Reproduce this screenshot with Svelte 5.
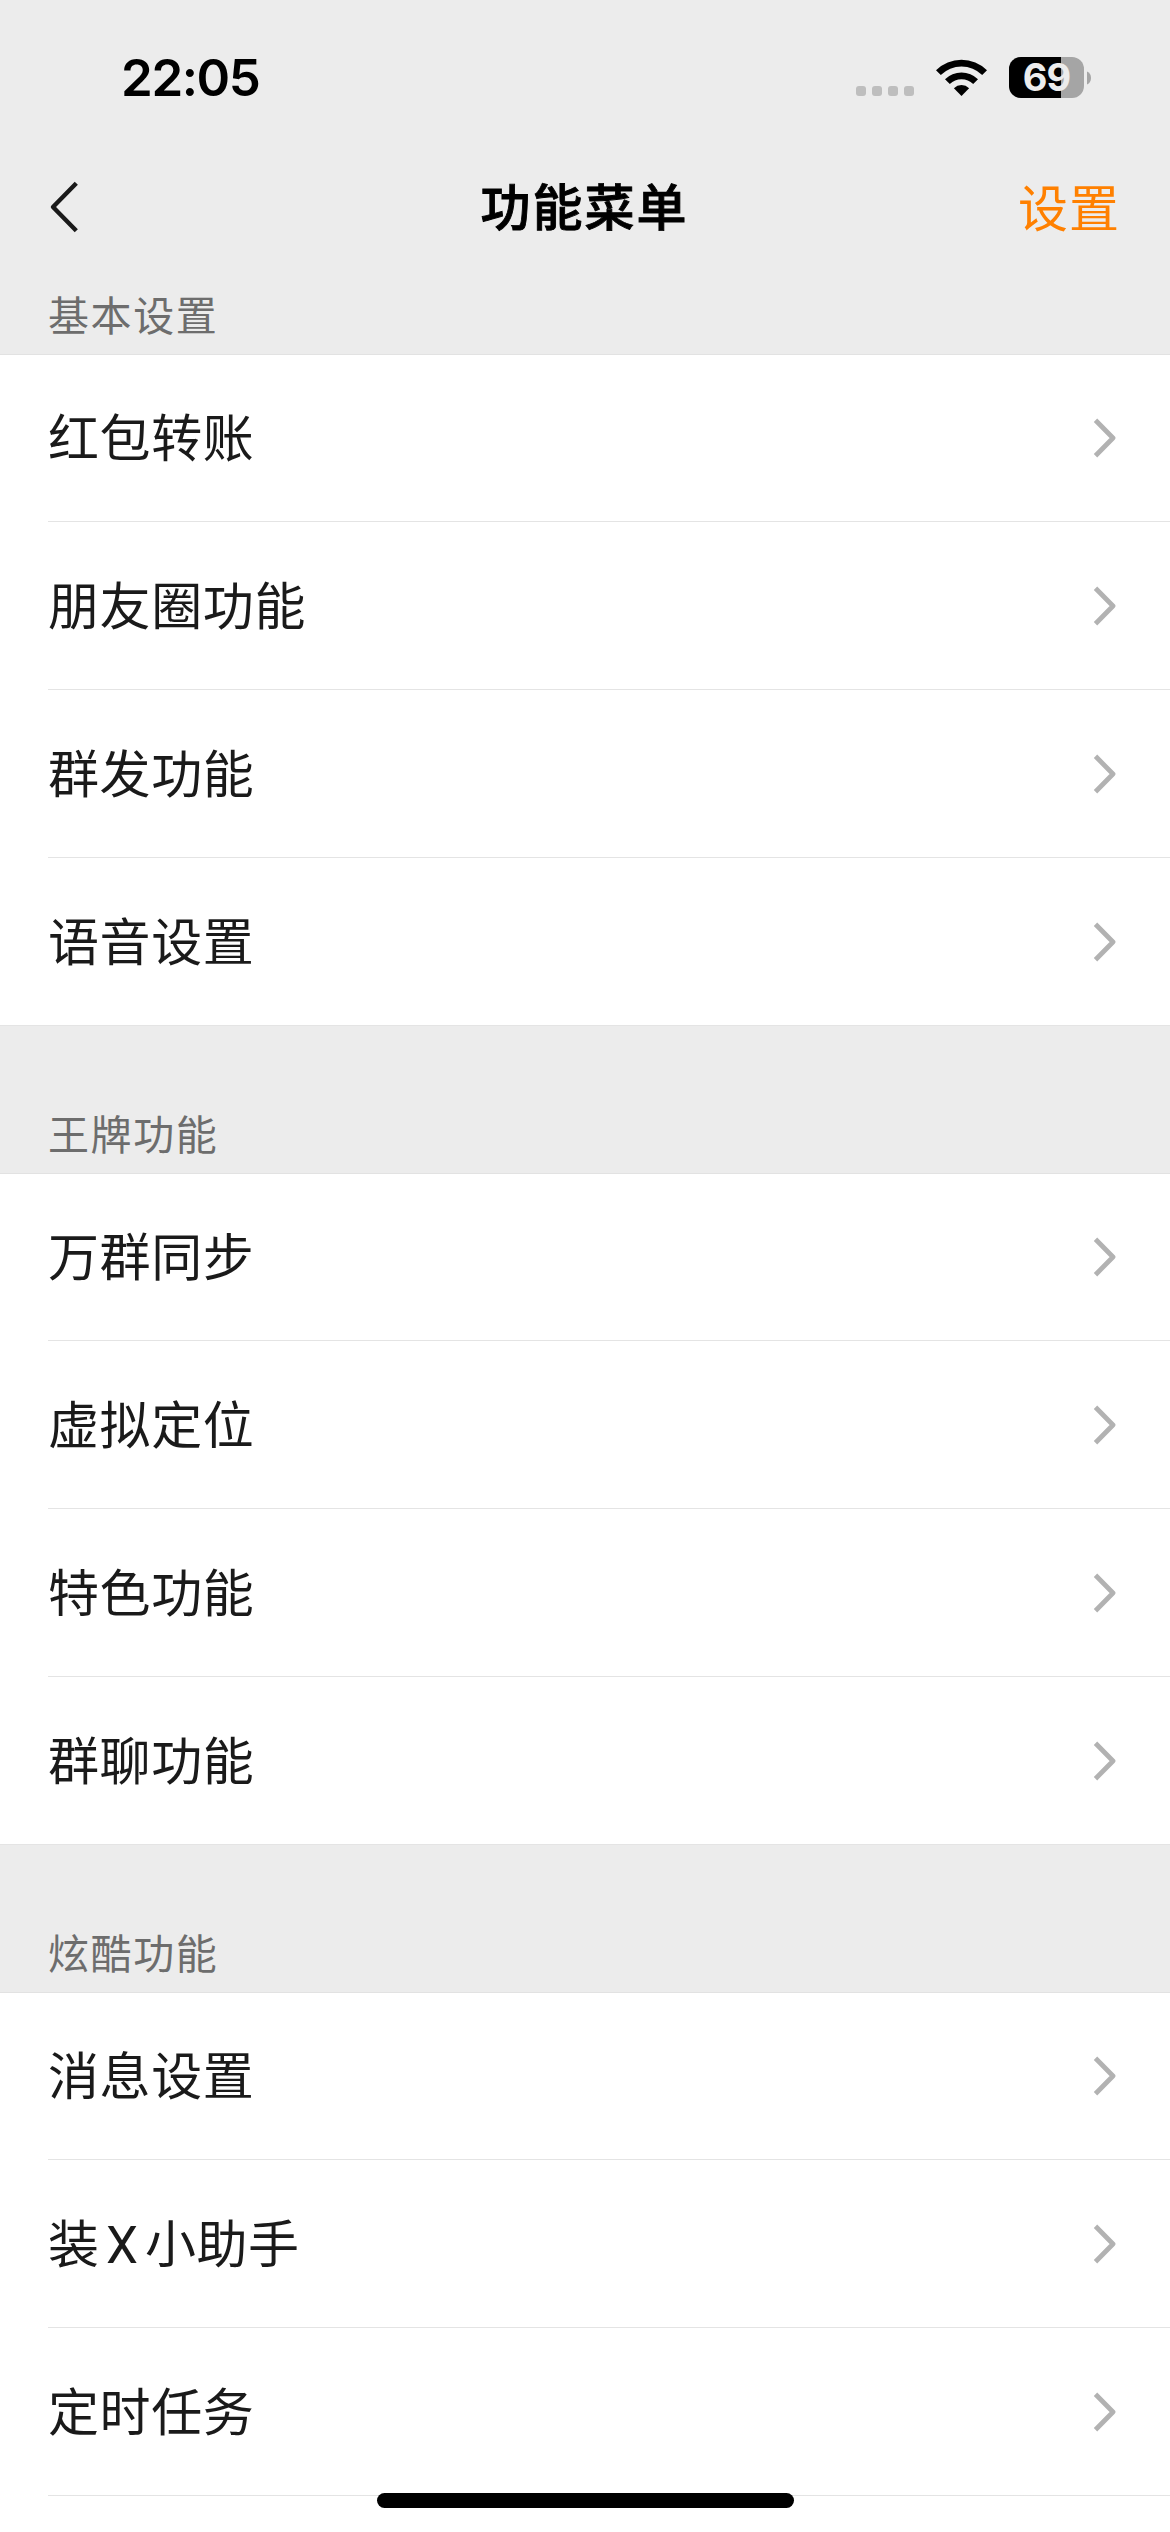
<script>
	const time = '22:05';
	const battery = 69;

	const sections = [
		{
			title: '基本设置',
			items: ['红包转账', '朋友圈功能', '群发功能', '语音设置']
		},
		{
			title: '王牌功能',
			items: ['万群同步', '虚拟定位', '特色功能', '群聊功能']
		},
		{
			title: '炫酷功能',
			items: ['消息设置', '装X小助手', '定时任务']
		}
	];
</script>

<div class="screen">
	<div class="status">
		<span class="time">{time}</span>
		<div class="indicators">
			<div class="signal">
				{#each Array(4) as _}
					<i></i>
				{/each}
			</div>
			<svg class="wifi" width="51" height="38" viewBox="0 0 51 38">
				<path d="M0 11.2A36.4 36.4 0 0 1 51 11.2L46.2 16A29.6 29.6 0 0 0 4.8 16Z" />
				<path d="M9 20.2A23.6 23.6 0 0 1 42 20.2L37.2 25A16.8 16.8 0 0 0 13.8 25Z" />
				<path d="M17.9 29.2A10.9 10.9 0 0 1 33.1 29.2L25.5 37Z" />
			</svg>
			<div class="battery">
				<div class="cell">
					<div class="level" style="width: {battery}%"></div>
					<span>{battery}</span>
				</div>
				<svg width="4" height="14" viewBox="0 0 4 14">
					<path d="M0 0.5C2.6 1.6 4 4 4 7S2.6 12.4 0 13.5Z" />
				</svg>
			</div>
		</div>
	</div>

	<nav>
		<button class="back" aria-label="返回">
			<svg width="30" height="54" viewBox="0 0 30 54">
				<path d="M27.3 3.2L4 27L27.3 50.8" />
			</svg>
		</button>
		<h1>功能菜单</h1>
		<button class="settings">设置</button>
	</nav>

	{#each sections as section}
		<section>
			<h2>{section.title}</h2>
			<ul>
				{#each section.items as item}
					<li>
						<span>{item}</span>
						<svg width="24" height="42" viewBox="0 0 24 42">
							<path d="M3.5 3.3L21 21L3.5 38.7" />
						</svg>
					</li>
				{/each}
			</ul>
		</section>
	{/each}

	<div class="home"></div>
</div>

<style>
	:global(body) {
		margin: 0;
		background: #ececec;
	}

	.screen {
		position: relative;
		display: flex;
		flex-direction: column;
		width: 1170px;
		height: 2532px;
		overflow: hidden;
		background: #ececec;
		color: #1a1a1a;
		font-family: 'Noto Sans CJK SC', sans-serif;
		text-autospace: normal;
	}

	.status {
		display: flex;
		justify-content: space-between;
		height: 141px;
		padding: 0 79px 0 121px;
		box-sizing: border-box;
		flex: none;
		color: #000;
		font-family: Inter, sans-serif;
	}

	.time {
		padding-top: 48px;
		font-size: 51px;
		font-weight: 600;
		line-height: 60px;
		letter-spacing: -1.4px;
	}

	.indicators {
		display: flex;
		align-items: flex-start;
		padding-top: 57px;
	}

	.signal {
		display: flex;
		gap: 6px;
		margin: 29px 22px 0 0;
	}

	.signal i {
		width: 10px;
		height: 10px;
		border-radius: 3px;
		background: #bebebe;
	}

	.wifi {
		margin: 2px 22px 0 0;
	}

	.battery {
		display: flex;
		align-items: center;
		gap: 3px;
	}

	.battery svg {
		fill: #a5a5a5;
	}

	.cell {
		display: grid;
		align-items: center;
		width: 75px;
		height: 41px;
		border-radius: 12px;
		background: #a5a5a5;
	}

	.level,
	.cell span {
		grid-area: 1 / 1;
	}

	.level {
		height: 41px;
		border-radius: 12px 0 0 12px;
		background: #000;
	}

	.cell span {
		color: #ececec;
		font-size: 38px;
		font-weight: 700;
		line-height: 41px;
		letter-spacing: -1px;
		text-align: center;
	}

	nav {
		display: grid;
		grid-template-columns: 1fr auto 1fr;
		align-items: center;
		flex: none;
		height: 132px;
		padding: 0 50px 0 49px;
		box-sizing: border-box;
	}

	button {
		padding: 0;
		border: none;
		background: none;
		font-family: inherit;
	}

	.back {
		justify-self: start;
		display: flex;
	}

	.back path,
	li path {
		fill: none;
		stroke: #1a1a1a;
		stroke-width: 4.4;
		stroke-linejoin: round;
	}

	h1 {
		margin: 0 0 6px;
		color: #000;
		font-size: 50px;
		font-weight: 500;
		line-height: 60px;
		letter-spacing: 2px;
		-webkit-text-stroke: 0.9px #000;
	}

	.settings {
		justify-self: end;
		margin-bottom: 5px;
		color: #ff8000;
		font-size: 50px;
		line-height: 60px;
		letter-spacing: 1px;
	}

	section {
		flex: none;
	}

	section:last-of-type {
		flex: 1;
		display: flex;
		flex-direction: column;
	}

	h2 {
		display: flex;
		align-items: flex-end;
		height: 147px;
		margin: 0;
		padding: 0 48px 11px;
		box-sizing: border-box;
		flex: none;
		color: #6d6d6d;
		font-size: 41px;
		font-weight: 400;
		line-height: 60px;
		letter-spacing: 1.6px;
	}

	section:first-of-type h2 {
		height: 81px;
	}

	ul {
		margin: 0;
		padding: 0;
		border-top: 1px solid #e2e2e2;
		border-bottom: 1px solid #e4e4e4;
		background: #fff;
		list-style: none;
	}

	section:last-of-type ul {
		flex: 1;
		border-bottom: none;
	}

	li {
		display: flex;
		align-items: center;
		justify-content: space-between;
		height: 168px;
		margin-left: 48px;
		padding-right: 54px;
		box-sizing: border-box;
		border-bottom: 1px solid #e4e4e4;
	}

	li:first-child {
		height: 167px;
	}

	section:not(:last-of-type) li:last-child {
		height: 167px;
		border-bottom: none;
	}

	li span {
		margin-top: 4px;
		font-family: Roboto, 'Noto Sans CJK SC', sans-serif;
		font-size: 51px;
		line-height: 60px;
		letter-spacing: 0.6px;
	}

	li path {
		stroke: #b2b2b2;
		stroke-width: 4.8;
	}

	.home {
		position: absolute;
		bottom: 24px;
		left: 377px;
		width: 417px;
		height: 15px;
		border-radius: 8px;
		background: #000;
	}
</style>
